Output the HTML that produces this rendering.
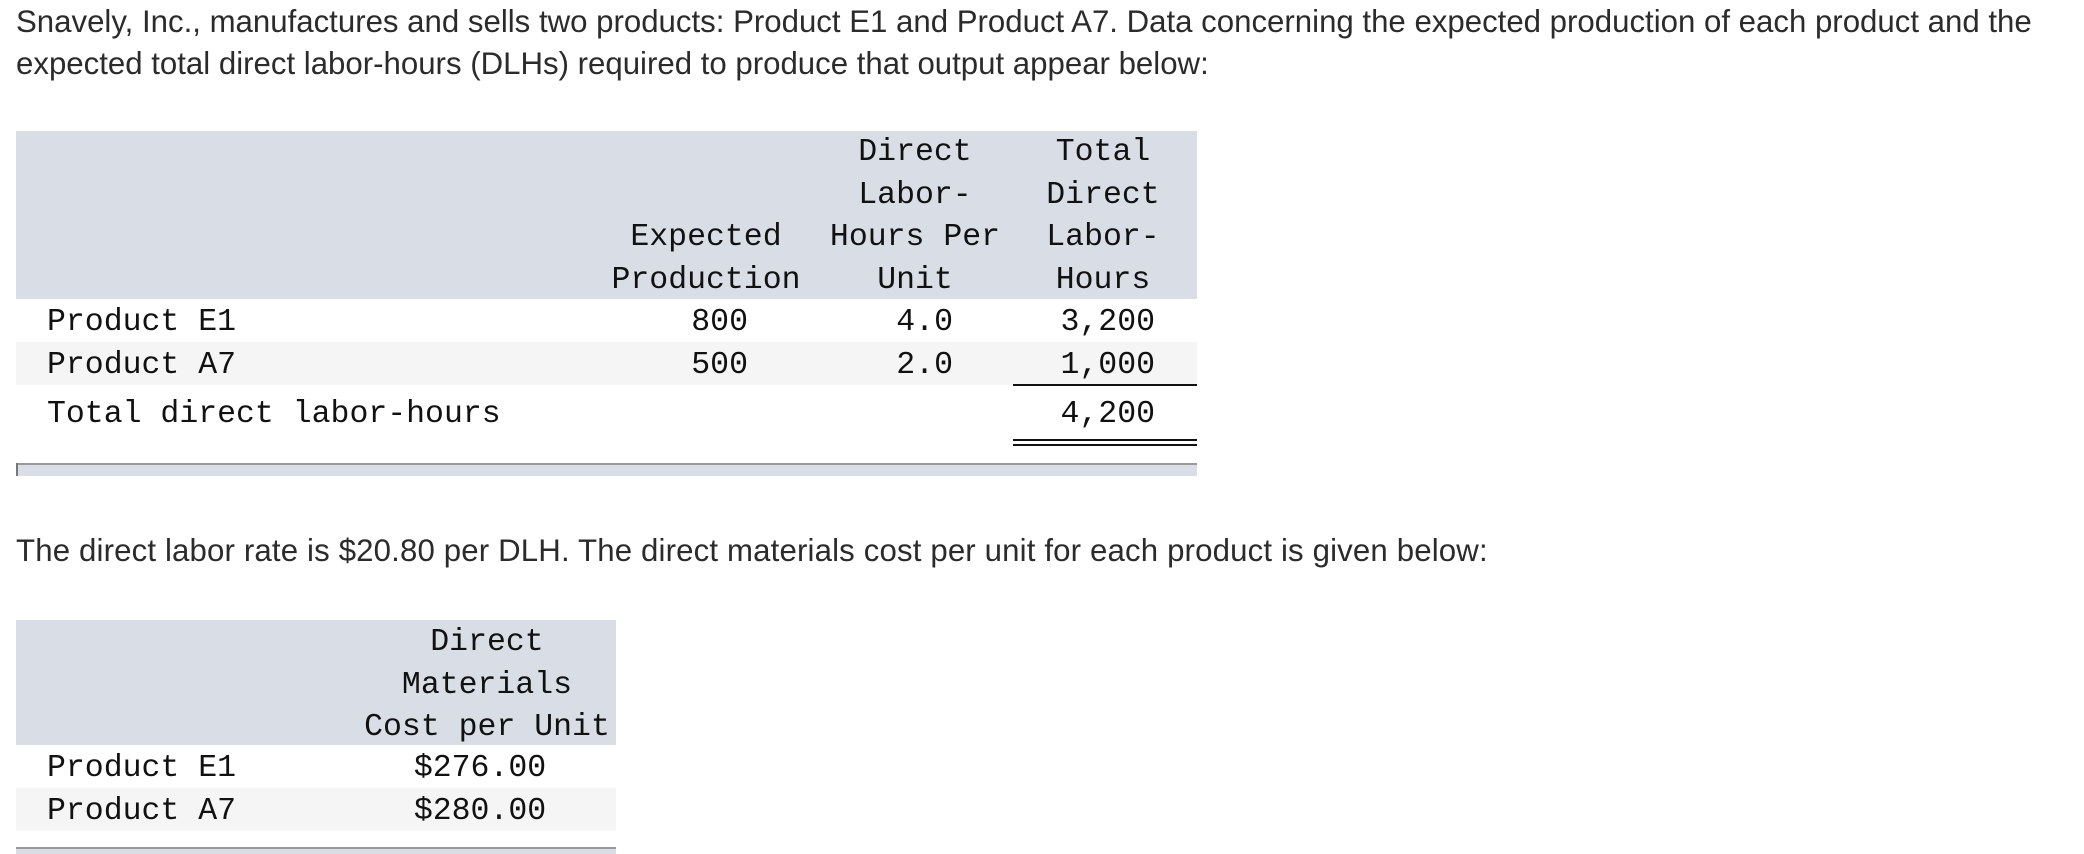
<!DOCTYPE html>
<html><head><meta charset="utf-8"><style>
body{margin:0;width:2084px;height:854px;background:#fff;position:relative;overflow:hidden;font-family:"Liberation Sans",sans-serif;color:#2b2b2b}
.p{position:absolute;left:16px;font-size:31.2px;line-height:42px;white-space:nowrap}
.m{position:absolute;font-family:"Liberation Mono",monospace;font-size:31.5px;line-height:42.7px;color:#111;white-space:nowrap}
.bg{position:absolute}
.c{text-align:center}
.r{text-align:right}
</style></head><body>
<div class="p" style="top:1px">Snavely, Inc., manufactures and sells two products: Product E1 and Product A7. Data concerning the expected production of each product and the<br>expected total direct labor-hours (DLHs) required to produce that output appear below:</div>

<div class="bg" style="left:16px;top:131px;width:1181px;height:168px;background:#d9dde5"></div>
<div class="bg" style="left:16px;top:342px;width:1181px;height:43px;background:#f5f5f5"></div>
<div class="bg" style="left:1013px;top:384px;width:184px;height:2px;background:#111"></div>
<div class="bg" style="left:1013px;top:439px;width:184px;height:2px;background:#111"></div>
<div class="bg" style="left:1013px;top:444px;width:184px;height:2px;background:#111"></div>
<div class="bg" style="left:16px;top:463px;width:1181px;height:13px;background:#d9dde5;border-top:2px solid #999;box-sizing:border-box"></div>
<div class="bg" style="left:16px;top:463px;width:2px;height:13px;background:#777"></div>

<div class="m c" style="left:596px;top:217px;width:220px">Expected<br>Production</div>
<div class="m c" style="left:815px;top:132px;width:200px">Direct<br>Labor-<br>Hours Per<br>Unit</div>
<div class="m c" style="left:1013px;top:132px;width:180px">Total<br>Direct<br>Labor-<br>Hours</div>
<div class="m" style="left:47px;top:302px">Product E1<br>Product A7</div>
<div class="m r" style="left:596px;top:302px;width:152px">800<br>500</div>
<div class="m r" style="left:815px;top:302px;width:138px">4.0<br>2.0</div>
<div class="m r" style="left:1013px;top:302px;width:142px">3,200<br>1,000</div>
<div class="m" style="left:47px;top:394px">Total direct labor-hours</div>
<div class="m r" style="left:1013px;top:394px;width:142px">4,200</div>

<div class="p" style="top:530px;letter-spacing:0.15px">The direct labor rate is $20.80 per DLH. The direct materials cost per unit for each product is given below:</div>

<div class="bg" style="left:16px;top:620px;width:600px;height:125px;background:#d9dde5"></div>
<div class="bg" style="left:16px;top:788px;width:600px;height:43px;background:#f5f5f5"></div>
<div class="bg" style="left:16px;top:847px;width:600px;height:7px;background:#d9dde5;border-top:2px solid #999;box-sizing:border-box"></div>
<div class="m c" style="left:357px;top:622px;width:260px">Direct<br>Materials<br>Cost per Unit</div>
<div class="m" style="left:47px;top:748px">Product E1<br>Product A7</div>
<div class="m c" style="left:378px;top:748px;width:204px">$276.00<br>$280.00</div>
</body></html>
